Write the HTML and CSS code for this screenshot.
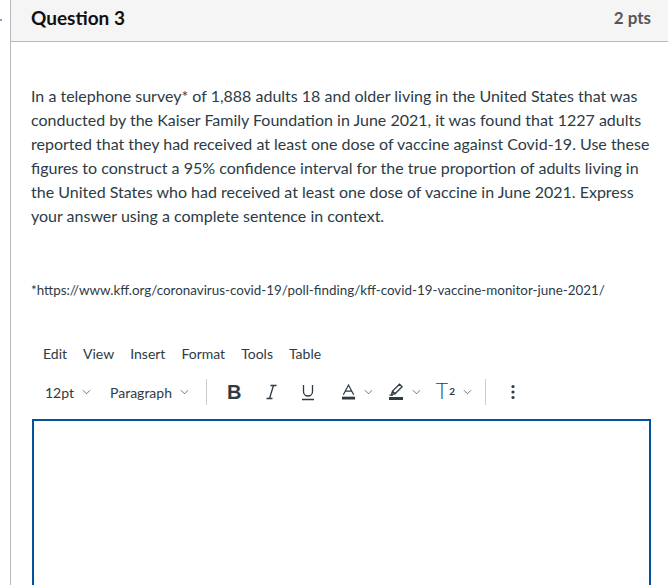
FILE: index.html
```html
<!DOCTYPE html>
<html lang="en">
<head>
<meta charset="utf-8">
<title>Question 3</title>
<link rel="stylesheet" href="styles.css">
</head>
<body>
<span class="focus-dot"></span>
<div class="question">
  <div class="question-header">
    <h2 class="question-name">Question 3</h2>
    <span class="question-points">2 pts</span>
  </div>
  <div class="question-body">
    <p class="question-text">In a telephone survey* of 1,888 adults 18 and older living in the United States that was conducted by the Kaiser Family Foundation in June 2021, it was found that 1227 adults reported that they had received at least one dose of vaccine against Covid-19. Use these figures to construct a 95% confidence interval for the true proportion of adults living in the United States who had received at least one dose of vaccine in June 2021. Express your answer using a complete sentence in context.</p>
    <p class="question-source">*https://www.kff.org/coronavirus-covid-19/poll-finding/kff-covid-19-vaccine-monitor-june-2021/</p>

    <div class="editor">
      <div class="menubar">
        <span class="menu-item">Edit</span>
        <span class="menu-item">View</span>
        <span class="menu-item">Insert</span>
        <span class="menu-item">Format</span>
        <span class="menu-item">Tools</span>
        <span class="menu-item">Table</span>
      </div>
      <div class="toolbar">
        <span class="tool select size">12pt <svg class="chev" viewBox="0 0 10 6"><path d="M1 1l4 4 4-4"/></svg></span>
        <span class="tool select block">Paragraph <svg class="chev" viewBox="0 0 10 6"><path d="M1 1l4 4 4-4"/></svg></span>
        <span class="sep sep-a"></span>
        <span class="tool bold">B</span>
        <span class="tool icon ital">
          <svg viewBox="0 0 11 16" width="11" height="16"><path d="M4.5 1.5h6M0.5 14.5h6M7.5 1.5L3.5 14.5"/></svg>
        </span>
        <span class="tool icon under">
          <svg viewBox="0 0 14 17" width="14" height="17"><path d="M2.5 1v6.5a4.5 4.5 0 009 0V1M1 15.5h12"/></svg>
        </span>
        <span class="tool icon color">
          <svg viewBox="0 0 16 18" width="15" height="18"><path d="M2.5 12L8 1.5l5.5 10.5M4.6 8h6.8"/><rect x="1" y="14" width="14" height="3" fill="#2d3b45" stroke="none"/></svg>
          <svg class="chev" viewBox="0 0 10 6"><path d="M1 1l4 4 4-4"/></svg>
        </span>
        <span class="tool icon highlight">
          <svg viewBox="0 0 16 18" width="16" height="18"><path d="M3.5 11.5l1-3.5L11.5 1.2l2.6 2.6L7 10.8zM4.5 8l2.5 2.8M1.5 12.2h3.5"/><rect x="1" y="14" width="14" height="3" fill="#2d3b45" stroke="none"/></svg>
          <svg class="chev" viewBox="0 0 10 6"><path d="M1 1l4 4 4-4"/></svg>
        </span>
        <span class="tool icon sup"><span class="sup-t">T</span><span class="sup-n">2</span>
          <svg class="chev" viewBox="0 0 10 6"><path d="M1 1l4 4 4-4"/></svg>
        </span>
        <span class="sep sep-b"></span>
        <span class="tool icon more">
          <svg viewBox="0 0 4 16" width="4" height="16"><circle cx="2" cy="2.5" r="1.6"/><circle cx="2" cy="8" r="1.6"/><circle cx="2" cy="13.5" r="1.6"/></svg>
        </span>
      </div>
      <div class="edit-area"></div>
    </div>
  </div>
</div>
</body>
</html>
```

FILE: styles.css
```css
html, body {
  margin: 0;
  padding: 0;
  background: #fff;
}

body {
  font-family: Lato, "Open Sans", sans-serif;
  color: #2d3b45;
  height: 585px;
  overflow: hidden;
  position: relative;
}

/* small focus marker at the left edge of the page */
.focus-dot {
  position: absolute;
  left: 0;
  top: 19px;
  width: 2px;
  height: 2px;
  background: #7fa7cf;
}

.question {
  margin-left: 10px;
  border-left: 1px solid #b5b9bd;
  min-height: 585px;
}

.question-header {
  display: flex;
  justify-content: space-between;
  align-items: center;
  height: 41px;
  padding: 0 17px 0 20px;
  background: #f5f5f5;
  border-bottom: 1px solid #b5b9bd;
}

.question-name {
  margin: 0;
  font-size: 19px;
  font-weight: 700;
  color: #111;
  position: relative;
  top: -3px;
}

.question-points {
  font-size: 17px;
  font-weight: 700;
  color: #555;
  position: relative;
  top: -3px;
}

.question-body {
  padding: 42px 17px 0 20px;
}

.question-text {
  margin: 0;
  font-size: 16px;
  line-height: 24px;
}

.question-source {
  margin: 50px 0 0;
  font-size: 13.4px;
  line-height: 24px;
}

.editor {
  margin-top: 42px;
}

.menubar {
  display: flex;
  padding-left: 4px;
  font-size: 14px;
  line-height: 20px;
}

.menu-item {
  padding: 0 8px;
}

.toolbar {
  display: flex;
  align-items: center;
  height: 28px;
  margin-top: 14px;
  padding-left: 14px;
  font-size: 14px;
}

.tool {
  display: inline-flex;
  align-items: center;
}

.chev {
  width: 9px;
  height: 6px;
  fill: none;
  stroke: #4a5863;
  stroke-width: 0.9;
}

.select .chev {
  margin-left: 8px;
}

.size {
  margin-right: 19px;
}

.block {
  margin-right: 17px;
}

.icon svg {
  fill: none;
  stroke: #2d3b45;
  stroke-width: 1.3;
}

.icon .chev {
  margin-left: 8px;
  stroke: #4a5863;
  stroke-width: 0.9;
}

.sep {
  width: 1px;
  height: 26px;
  background: #c7cdd1;
}

.sep-a {
  margin-right: 20px;
}

.sep-b {
  margin-right: 25px;
}

.bold {
  font-size: 20px;
  font-weight: 700;
  font-family: "Liberation Sans", Arial, sans-serif;
  margin-right: 25px;
}

.ital {
  margin-right: 24px;
}

.under {
  margin-right: 26px;
}

.color {
  margin-right: 15px;
}

.highlight {
  margin-right: 14px;
}

.sup {
  margin-right: 13px;
}

.sup-t {
  font-family: "DejaVu Sans", sans-serif;
  font-weight: 200;
  font-size: 21px;
  line-height: 1;
}

.sup-n {
  font-size: 10px;
  font-weight: 700;
  align-self: flex-start;
  margin-top: 3px;
  margin-left: 1px;
}

.more svg {
  fill: #2d3b45;
  stroke: none;
}

.edit-area {
  margin-top: 13px;
  margin-left: 1px;
  height: 200px;
  border: 2px solid #03529c;
}
```
